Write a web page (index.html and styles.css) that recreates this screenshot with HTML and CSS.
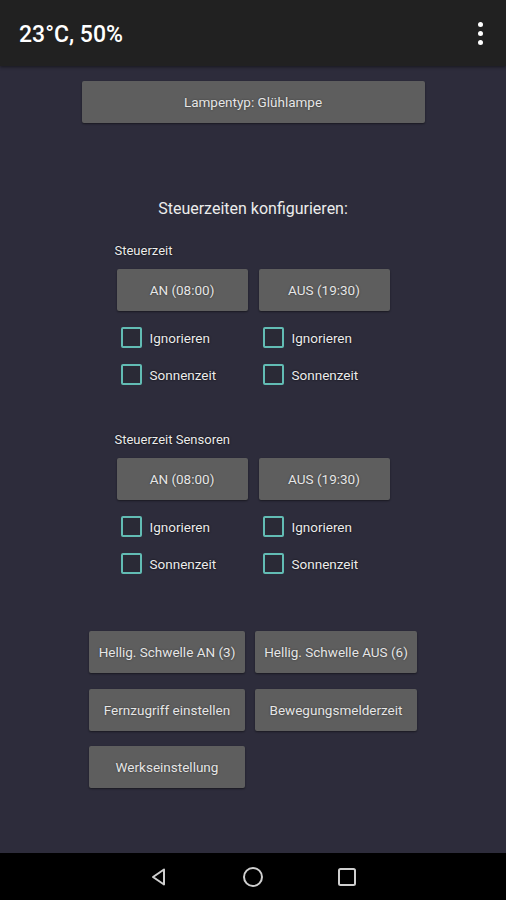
FILE: index.html
```html
<!DOCTYPE html>
<html>
	<head>
		<meta charset="utf-8">
		<link rel="stylesheet" href="styles.css">
	</head>
	<body>
		<div class="appbar">
			<span class="appbar-title">23°C, 50%</span>
			<span class="menu"><i></i><i></i><i></i></span>
		</div>
		<div class="content">
			<div class="btn lamp">Lampentyp: Glühlampe</div>
			<div class="heading">Steuerzeiten konfigurieren:</div>

			<div class="section">
				<div class="section-label">Steuerzeit</div>
				<div class="pair">
					<div class="btn time">AN (08:00)</div>
					<div class="btn time">AUS (19:30)</div>
				</div>
				<div class="checks">
					<label class="check"><span class="box"></span>Ignorieren</label>
					<label class="check"><span class="box"></span>Ignorieren</label>
					<label class="check"><span class="box"></span>Sonnenzeit</label>
					<label class="check"><span class="box"></span>Sonnenzeit</label>
				</div>
			</div>

			<div class="section second">
				<div class="section-label">Steuerzeit Sensoren</div>
				<div class="pair">
					<div class="btn time">AN (08:00)</div>
					<div class="btn time">AUS (19:30)</div>
				</div>
				<div class="checks">
					<label class="check"><span class="box"></span>Ignorieren</label>
					<label class="check"><span class="box"></span>Ignorieren</label>
					<label class="check"><span class="box"></span>Sonnenzeit</label>
					<label class="check"><span class="box"></span>Sonnenzeit</label>
				</div>
			</div>

			<div class="settings">
				<div class="btn">Hellig. Schwelle AN (3)</div>
				<div class="btn">Hellig. Schwelle AUS (6)</div>
				<div class="btn">Fernzugriff einstellen</div>
				<div class="btn">Bewegungsmelderzeit</div>
				<div class="btn">Werkseinstellung</div>
			</div>
		</div>
		<div class="navbar">
			<svg width="20" height="20" viewBox="0 0 20 20"><path d="M15 2.5 L4 10 L15 17.5 Z" fill="none" stroke="#cfcfcf" stroke-width="2" stroke-linejoin="round"/></svg>
			<svg width="22" height="22" viewBox="0 0 22 22"><circle cx="11" cy="11" r="9" fill="none" stroke="#cfcfcf" stroke-width="2"/></svg>
			<svg width="20" height="20" viewBox="0 0 20 20"><rect x="2" y="2" width="16" height="16" rx="1.5" fill="none" stroke="#cfcfcf" stroke-width="2"/></svg>
		</div>
	</body>
</html>
```
FILE: styles.css
```css
body {
	margin: 0;
	height: 900px;
	display: flex;
	flex-direction: column;
	background-color: #2d2c3b;
	font-family: Roboto, "Liberation Sans", sans-serif;
	color: #ececec;
	overflow: hidden;
}

.appbar {
	height: 66px;
	flex: none;
	display: flex;
	align-items: center;
	justify-content: space-between;
	padding: 0 19px 0 19px;
	background-color: #212121;
	box-shadow: 0 1px 3px rgba(0, 0, 0, 0.5);
}

.appbar-title {
	font-size: 23px;
	font-weight: 500;
	color: #ffffff;
	margin-top: 2px;
}

.menu {
	display: flex;
	flex-direction: column;
	gap: 4px;
	margin-right: 4px;
}

.menu i {
	width: 5px;
	height: 5px;
	border-radius: 50%;
	background-color: #ffffff;
}

.content {
	flex: 1;
	display: flex;
	flex-direction: column;
	align-items: center;
	padding-top: 15px;
}

.btn {
	height: 42px;
	display: flex;
	align-items: center;
	justify-content: center;
	background-color: #5e5e5e;
	border-radius: 2px;
	box-shadow: 0 1px 2px rgba(0, 0, 0, 0.45);
	font-size: 13.5px;
	color: #e6e6e6;
	text-shadow: 0 0 2px rgba(0, 0, 0, 0.5);
	box-sizing: border-box;
}

.lamp {
	width: 343px;
}

.heading {
	margin-top: 76px;
	line-height: 20px;
	font-size: 16px;
}

.section {
	width: 277px;
	margin-top: 24px;
}

.section.second {
	margin-top: 39px;
}

.section-label {
	line-height: 16px;
	font-size: 13px;
	text-shadow: 0 0 2px #000;
	margin-bottom: 10px;
}

.pair {
	display: grid;
	grid-template-columns: 131px 131px;
	column-gap: 11px;
	padding-left: 2px;
}

.checks {
	display: grid;
	grid-template-columns: 142px 130px;
	margin-top: 8px;
	padding-left: 6px;
}

.check {
	height: 37px;
	display: flex;
	align-items: center;
	font-size: 13.5px;
	text-shadow: 0 0 2px #000;
}

.box {
	width: 17px;
	height: 17px;
	border: 2px solid #62bcb4;
	border-radius: 2px;
	margin-right: 8px;
	background-color: #2a2a36;
}

.settings {
	display: grid;
	grid-template-columns: 156px 162px;
	column-gap: 10px;
	row-gap: 15.5px;
	margin-top: 49px;
}

.navbar {
	height: 47px;
	flex: none;
	display: flex;
	align-items: center;
	justify-content: center;
	gap: 73px;
	background-color: #000000;
}
```
